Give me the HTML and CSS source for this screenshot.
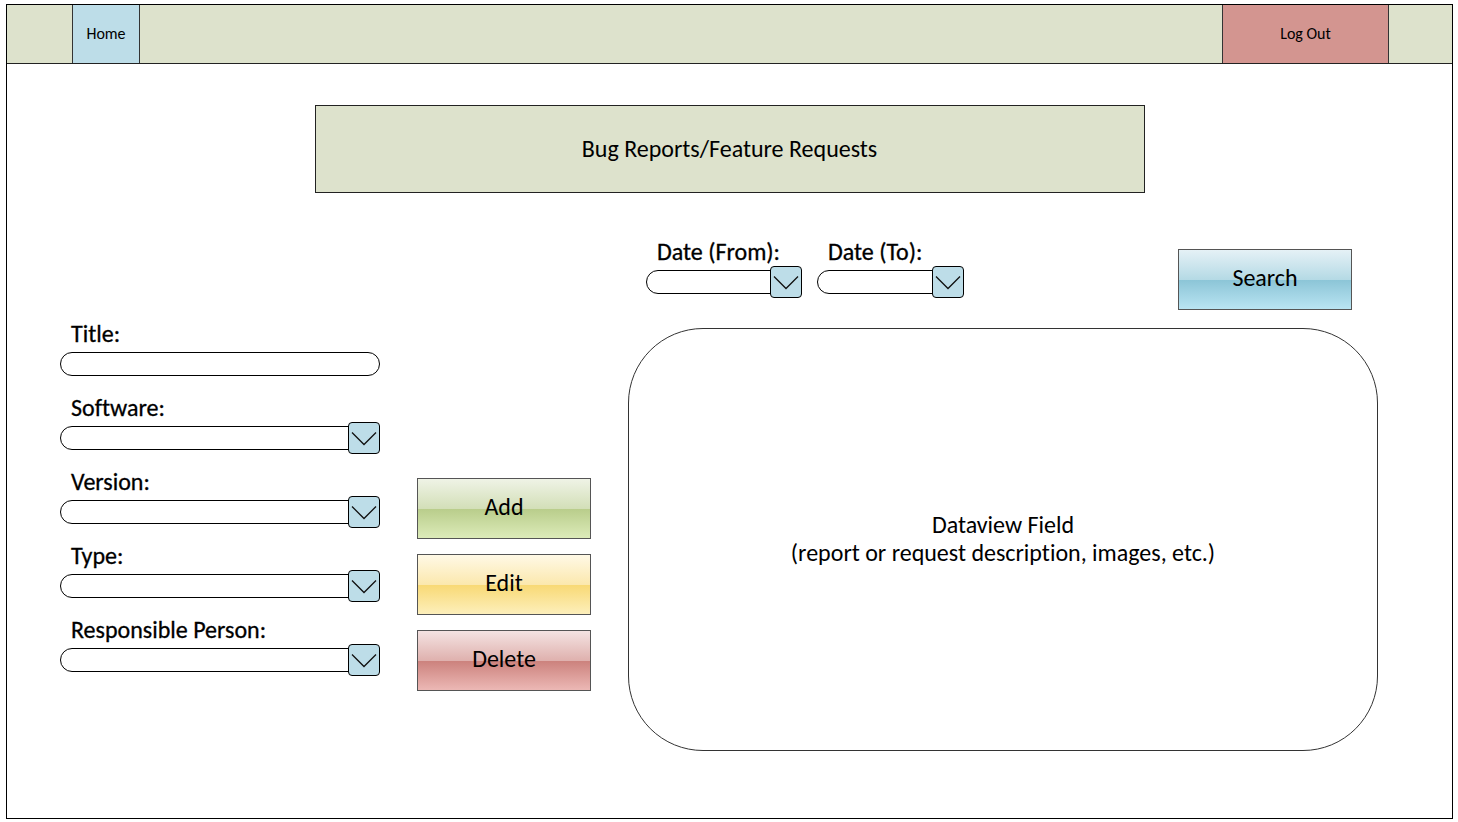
FILE: index.html
```html
<!DOCTYPE html>
<html lang="en">
<head>
<meta charset="utf-8">
<meta name="viewport" content="width=device-width, initial-scale=1">
<title>Bug Reports/Feature Requests</title>
<link rel="stylesheet" href="styles.css">
</head>
<body>
<div class="frame">
  <nav class="topbar">
    <a class="nav-link home" href="#">Home</a>
    <button class="nav-link logout" type="button">Log Out</button>
  </nav>
  <h1 class="page-title">Bug Reports/Feature Requests</h1>
  <main class="content">
    <div class="toolbar">
      <div class="field date-from">
        <label for="from">Date (From):</label>
        <div class="combo">
          <select id="from"><option></option></select>
          <svg class="arrow" viewBox="0 0 30 30" aria-hidden="true"><path d="M3 9.500 15 21.500 27 9.500"/></svg>
        </div>
      </div>
      <div class="field date-to">
        <label for="to">Date (To):</label>
        <div class="combo">
          <select id="to"><option></option></select>
          <svg class="arrow" viewBox="0 0 30 30" aria-hidden="true"><path d="M3 9.500 15 21.500 27 9.500"/></svg>
        </div>
      </div>
      <button class="action search" type="button">Search</button>
    </div>
    <form class="fields">
      <div class="field">
        <label for="title">Title:</label>
        <div class="combo"><input id="title" type="text"></div>
      </div>
      <div class="field">
        <label for="software">Software:</label>
        <div class="combo">
          <select id="software"><option></option></select>
          <svg class="arrow" viewBox="0 0 30 30" aria-hidden="true"><path d="M3 9.500 15 21.500 27 9.500"/></svg>
        </div>
      </div>
      <div class="field">
        <label for="version">Version:</label>
        <div class="combo">
          <select id="version"><option></option></select>
          <svg class="arrow" viewBox="0 0 30 30" aria-hidden="true"><path d="M3 9.500 15 21.500 27 9.500"/></svg>
        </div>
      </div>
      <div class="field">
        <label for="type">Type:</label>
        <div class="combo">
          <select id="type"><option></option></select>
          <svg class="arrow" viewBox="0 0 30 30" aria-hidden="true"><path d="M3 9.500 15 21.500 27 9.500"/></svg>
        </div>
      </div>
      <div class="field">
        <label for="person">Responsible Person:</label>
        <div class="combo">
          <select id="person"><option></option></select>
          <svg class="arrow" viewBox="0 0 30 30" aria-hidden="true"><path d="M3 9.500 15 21.500 27 9.500"/></svg>
        </div>
      </div>
    </form>
    <div class="actions">
      <button class="action add" type="button">Add</button>
      <button class="action edit" type="button">Edit</button>
      <button class="action delete" type="button">Delete</button>
    </div>
    <section class="dataview">
      <p>Dataview Field</p>
      <p>(report or request description, images, etc.)</p>
    </section>
  </main>
</div>
</body>
</html>
```

FILE: styles.css
```css
* {
  box-sizing: border-box;
}

body {
  margin: 0;
  padding: 4px 5px 3px 6px;
  background: #fff;
  color: #000;
  font-family: Carlito, Lato, sans-serif;
  font-size: 24px;
  font-variant-ligatures: none;
  line-height: 28px;
}

button,
input,
select {
  font: inherit;
  color: inherit;
}

.frame {
  display: flex;
  flex-direction: column;
  min-height: calc(100vh - 7px);
  border: 1px solid #000;
}

.topbar {
  display: flex;
  justify-content: space-between;
  height: 59px;
  padding: 0 63px 0 65px;
  background: #dde2cc;
  border-bottom: 1px solid #222;
}

.nav-link {
  display: flex;
  align-items: center;
  justify-content: center;
  border: solid #333;
  border-width: 0 1px;
  color: #000;
  font-size: 16px;
  text-decoration: none;
}

.home {
  width: 68px;
  background: #bddde8;
}

.logout {
  width: 167px;
  background: #d39590;
}

.page-title {
  display: flex;
  align-items: center;
  justify-content: center;
  align-self: center;
  width: 100%;
  max-width: 830px;
  height: 88px;
  margin: 41px 0 45px;
  background: #dde2cc;
  border: 1px solid #222;
  font-size: 24px;
  font-weight: 400;
}

.content {
  flex: 1;
  display: grid;
  grid-template-columns: 320px 174px 1fr;
  grid-template-rows: auto 1fr;
  gap: 10px 37px;
  padding: 0 74px 67px 53px;
}

.toolbar {
  grid-column: 3;
  display: flex;
  gap: 15px;
  padding: 0 26px 0 18px;
}

.fields {
  grid-column: 1;
  display: flex;
  flex-direction: column;
  gap: 14px;
}

.field {
  display: flex;
  flex-direction: column;
}

.field label {
  padding-left: 11px;
  -webkit-text-stroke: 0.3px #000;
}

.date-from {
  width: 156px;
}

.date-to {
  width: 147px;
}

.combo {
  display: grid;
  align-items: center;
  height: 32px;
}

.combo > * {
  grid-area: 1 / 1;
}

.combo input,
.combo select {
  appearance: none;
  width: 100%;
  height: 24px;
  padding: 0 12px;
  background: #fff;
  border: 1px solid #000;
  border-radius: 12px;
  font-size: 16px;
  line-height: 20px;
}

.combo select {
  padding-right: 36px;
}

.arrow {
  justify-self: end;
  width: 32px;
  height: 32px;
  background: #bddde8;
  border: 1px solid #000;
  border-radius: 4px;
  fill: none;
  stroke: #111;
  stroke-width: 1.3;
  pointer-events: none;
}

.actions {
  display: flex;
  flex-direction: column;
  gap: 15px;
  padding-top: 158px;
}

.action {
  width: 174px;
  height: 61px;
  padding: 0 0 3px;
  border: 1px solid #555;
}

.search {
  margin: 11px 0 0 auto;
  background: linear-gradient(#e5f1f6, #b5dae5 50%, #8cc5d7 51%, #b9e4f2);
}

.add {
  background: linear-gradient(#eff3e6, #d3dfb8 50%, #b9cd8b 51%, #dcebb9);
}

.edit {
  background: linear-gradient(#fff9e6, #fbe8ae 50%, #f8d975 51%, #fdefbb);
}

.delete {
  background: linear-gradient(#f4e3e2, #dfb1ae 50%, #cc827d 51%, #ecb8b5);
}

.dataview {
  display: flex;
  flex-direction: column;
  align-items: center;
  justify-content: center;
  margin-top: 8px;
  padding-bottom: 2px;
  border: 1px solid #333;
  border-radius: 75px;
  text-align: center;
}

.dataview p {
  margin: 0;
}
```
